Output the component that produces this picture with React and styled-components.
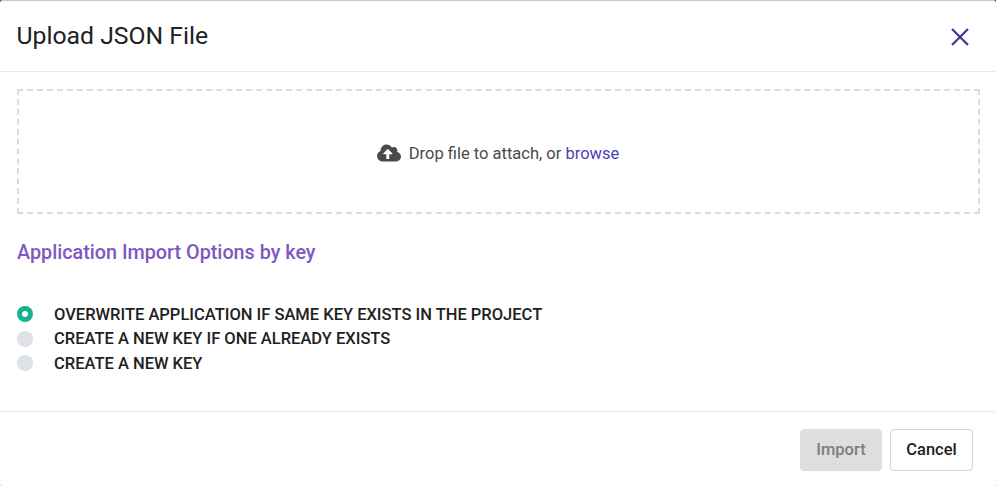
import React from "react";
import styled, { createGlobalStyle } from "styled-components";
import { FaCloudUploadAlt } from "react-icons/fa";

const GlobalStyle = createGlobalStyle`
  * { box-sizing: border-box; }
  html { font-size: 16.5px; }
  body {
    margin: 0; font-family: Roboto, sans-serif; color: #212121;
    background: linear-gradient(#55506a 0 50%, #d9d9d9 50%);
  }
`;
const Dialog = styled.section`
  width: 996px; height: 486px; display: flex; flex-direction: column;
  background: #fff; border-top: 1px solid #c9c9c9;
  border-radius: 3px;
`;
const Header = styled.header`
  height: 71px; padding: 0 26px 0 16.5px; display: flex; align-items: center;
  justify-content: space-between; border-bottom: 1px solid #e9e9e9;
`;
const Title = styled.h1`
  margin: 0; font-size: 1.5rem; line-height: 32px; font-weight: 400;
`;
const CloseButton = styled.button`
  border: 0; padding: 2px 0 0; background: none; display: flex; color: #45309a;
`;
const Body = styled.main` flex: 1; padding: 17px 16px 0 17px; `;
const DropZone = styled.div`
  height: 125px; padding: 3px 1px 0 0; border: 2px dashed #dcdcdc; display: flex; align-items: center;
  justify-content: center; gap: 8px; font-size: 1rem; color: #4a4a4a;
`;
const Browse = styled.a` color: #4c3fb5; `;
const OptionsTitle = styled.h2`
  margin: 26px 0 0; font-size: 19.77px; line-height: 26px; font-weight: 500;
  color: #7e57c2;
`;
const Options = styled.div` margin-top: 36px; `;
const Option = styled.label`
  display: flex; align-items: center; height: 24.5px; gap: 21px;
  font-size: 1rem; font-weight: 500;
`;
const Radio = styled.span`
  width: 16px; height: 16px; border-radius: 50%;
  background: ${(p) => (p.$checked ? "radial-gradient(circle, #fff 2.6px, #14b192 3.4px)" : "#dee2e6")};
`;
const Footer = styled.footer`
  height: 75px; border-top: 1px solid #e9e9e9; padding: 17px 23px 0; display: flex;
  justify-content: flex-end; gap: 8px;
`;
const Button = styled.button`
  width: ${(p) => p.$width}px; height: 42px; padding: 0 0 2px; border-radius: 4px;
  border: 1px solid ${(p) => (p.disabled ? "#dedede" : "#ced4da")};
  background: ${(p) => (p.disabled ? "#dedede" : "#fff")};
  color: ${(p) => (p.disabled ? "#7d7d7d" : "#212121")};
  font: 500 1rem Roboto, sans-serif;
`;
const options = [
  "OVERWRITE APPLICATION IF SAME KEY EXISTS IN THE PROJECT",
  "CREATE A NEW KEY IF ONE ALREADY EXISTS",
  "CREATE A NEW KEY",
];
export default function App() {
  return (
    <>
      <GlobalStyle />
      <Dialog>
        <Header>
          <Title>Upload JSON File</Title>
          <CloseButton aria-label="Close">
            <svg width="20" height="20" viewBox="0 0 20 20" fill="none" stroke="currentColor" strokeWidth="2.2">
              <path d="M2 2 18 18M18 2 2 18" />
            </svg>
          </CloseButton>
        </Header>
        <Body>
          <DropZone>
            <FaCloudUploadAlt size={24} />
            <span>Drop file to attach, or <Browse>browse</Browse></span>
          </DropZone>
          <OptionsTitle>Application Import Options by key</OptionsTitle>
          <Options>
            {options.map((text, i) => (
              <Option key={text}><Radio $checked={i === 0} />{text}</Option>
            ))}
          </Options>
        </Body>
        <Footer>
          <Button $width={82} disabled>Import</Button>
          <Button $width={83}>Cancel</Button>
        </Footer>
      </Dialog>
    </>
  );
}
